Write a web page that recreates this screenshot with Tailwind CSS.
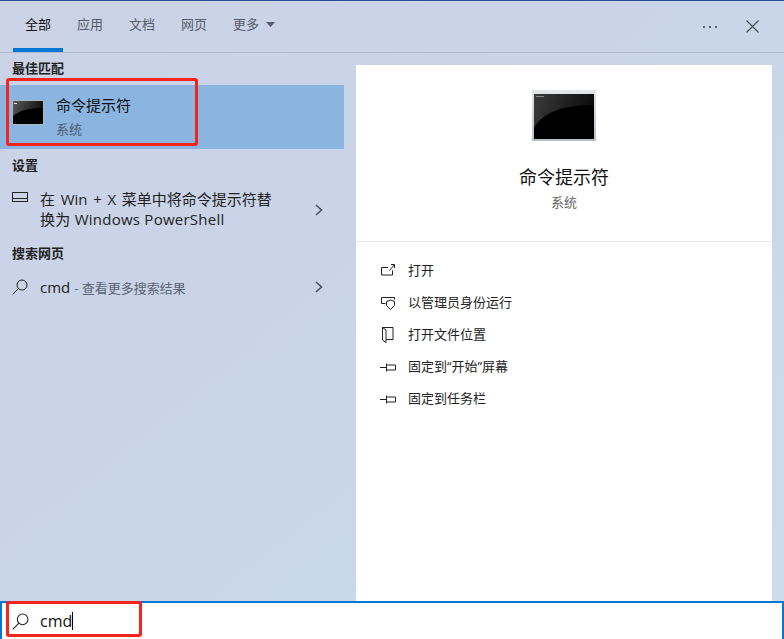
<!DOCTYPE html>
<html lang="zh-CN">
<head>
  <meta charset="UTF-8" />
  <title>搜索</title>
  <script src="https://cdn.jsdelivr.net/npm/@tailwindcss/browser@4"></script>
</head>
<body class="w-[784px] h-[639px] overflow-hidden font-['Open_Sans','Noto_Sans_CJK_SC',sans-serif] text-[15px] text-[#1a1a1a]">
  <div class="relative w-[784px] h-[639px] flex flex-col bg-gradient-to-br from-[#cbd2e6] via-[#c9d5e9] to-[#cbdcee] border-t border-[#2b4f94]">

    <!-- tabs -->
    <header class="h-[52px] shrink-0 flex items-center border-b border-[#b3bccf] pl-[13px] pr-[25px]">
      <nav class="flex h-full text-[13px] text-[#555d6b]">
        <a class="w-[50px] flex items-center justify-center border-b-4 border-[#0078d4] text-[#111]">全部</a>
        <a class="w-[52px] flex items-center justify-center border-b-4 border-transparent ml-[1px]">应用</a>
        <a class="w-[52px] flex items-center justify-center border-b-4 border-transparent">文档</a>
        <a class="w-[52px] flex items-center justify-center border-b-4 border-transparent">网页</a>
        <a class="ml-[13px] flex items-center gap-[7px] border-b-4 border-transparent">更多
          <svg width="9" height="5" viewBox="0 0 9 5"><path d="M0 0h9L4.5 5z" fill="#555d6b"/></svg>
        </a>
      </nav>
      <div class="ml-auto flex items-center gap-[29px]">
        <svg width="14" height="2" viewBox="0 0 14 2" fill="#5a6270"><rect x="0" y="0" width="2" height="2"/><rect x="6" y="0" width="2" height="2"/><rect x="12" y="0" width="2" height="2"/></svg>
        <svg width="13" height="13" viewBox="0 0 13 13" fill="none" stroke="#444c58" stroke-width="1.1"><path d="M.5.5l12 12M12.5.5l-12 12"/></svg>
      </div>
    </header>

    <div class="flex-1 flex min-h-0 pt-[8px]">
      <!-- results -->
      <main class="w-[344px] shrink-0">
        <h2 class="pl-[12px] h-[24px] text-[13px] font-bold leading-[15px] text-[#222]">最佳匹配</h2>
        <div class="h-[64px] bg-[#8ab5e0] flex items-center pl-[12px]">
          <svg width="32" height="25" viewBox="0 0 32 25" class="shrink-0 mb-[9px]">
            <defs>
              <linearGradient id="gloss-small" x1="0" y1="0" x2="1" y2="0.2"><stop offset="0" stop-color="#5a5a5a"/><stop offset="1" stop-color="#111"/></linearGradient>
            </defs>
            <rect width="32" height="25" fill="#aeb6bf"/>
            <rect x="1" y="1" width="30" height="23" fill="#000"/>
            <path d="M1 1h30v7C18 8 8 10 1 16z" fill="url(#gloss-small)"/>
            <rect x="2" y="3" width="3" height="1" fill="#ddd"/>
          </svg>
          <div class="ml-[12px]">
            <div class="text-[15px] leading-[20px] text-[#111] mt-[-2px]">命令提示符</div>
            <div class="text-[13px] leading-[17px] text-[#4d5c70] mt-[6px]">系统</div>
          </div>
        </div>

        <h2 class="pl-[12px] mt-[8px] h-[24px] text-[13px] font-bold leading-[17px] text-[#222]">设置</h2>
        <div class="flex h-[58px] pl-[12px] pr-[21px] pt-[8px]">
          <svg width="16" height="10" viewBox="0 0 16 10" fill="none" stroke="#222" class="mt-[3px] shrink-0"><rect x=".5" y=".5" width="15" height="9"/><path d="M0 6.5h16"/></svg>
          <div class="ml-[12px] w-[240px] text-[15px] leading-[20px] text-[#222] whitespace-nowrap">
            <div class="[word-spacing:1.8px]">在 Win + X 菜单中将命令提示符替</div>
            <div class="tracking-[0.25px]">换为 Windows PowerShell</div>
          </div>
          <svg width="8" height="12" viewBox="0 0 8 12" fill="none" stroke="#4a5260" stroke-width="1.6" class="ml-auto mt-[15px]"><path d="M1 1l5.5 5L1 11"/></svg>
        </div>

        <h2 class="pl-[12px] mt-[6px] h-[24px] text-[13px] font-bold leading-[17px] text-[#222]">搜索网页</h2>
        <div class="flex items-center h-[36px] pl-[12px] pr-[21px]">
          <svg width="16" height="16" viewBox="0 0 16 16" fill="none" stroke="#222" class="shrink-0"><circle cx="10" cy="6" r="5"/><path d="M6.5 9.5L.7 15.5"/></svg>
          <div class="ml-[12px] flex items-baseline gap-[4px]"><span class="text-[#222]">cmd</span><span class="text-[13px] text-[#5a6472]">- 查看更多搜索结果</span></div>
          <svg width="8" height="12" viewBox="0 0 8 12" fill="none" stroke="#4a5260" stroke-width="1.6" class="ml-auto"><path d="M1 1l5.5 5L1 11"/></svg>
        </div>
      </main>

      <!-- preview -->
      <aside class="ml-[12px] mt-[4px] w-[416px] bg-white flex flex-col">
        <div class="h-[177px] shrink-0 border-b border-[#e6e6e6] flex flex-col items-center pt-[25px]">
          <svg width="64" height="51" viewBox="0 0 64 51">
            <defs>
              <linearGradient id="gloss-big" x1="0" y1="0" x2="1" y2="0.2"><stop offset="0" stop-color="#3c3c3c"/><stop offset="1" stop-color="#0c0c0c"/></linearGradient>
              <linearGradient id="frame" x1="0" y1="0" x2="0" y2="1"><stop offset="0" stop-color="#e4e6e8"/><stop offset="1" stop-color="#b9bfc6"/></linearGradient>
            </defs>
            <rect width="64" height="51" fill="url(#frame)"/>
            <rect x="2" y="4" width="60" height="45" fill="#000"/>
            <path d="M2 4h60v11C36 15 12 20 2 38z" fill="url(#gloss-big)"/>
            <rect x="4" y="6" width="8" height="1" fill="#888"/>
          </svg>
          <div class="mt-[23px] text-[18px] leading-[26px] text-[#111]">命令提示符</div>
          <div class="mt-[4px] text-[13px] leading-[17px] text-[#666]">系统</div>
        </div>
        <ul class="pt-[13px] text-[13px] text-[#222]">
          <li class="h-[32px] flex items-center pl-[24px] gap-[12px]">
            <svg width="16" height="16" viewBox="0 0 16 16" fill="none" stroke="#222"><path d="M8 4.5H1.5V12h11V7.5M9.5 7.5l5-6M11 1.5h3.5V5"/></svg>
            打开
          </li>
          <li class="h-[32px] flex items-center pl-[24px] gap-[12px]">
            <svg width="16" height="16" viewBox="0 0 16 16" fill="none" stroke="#222"><path d="M5.5 8.5h-4v-6h13v2M6.5 6.5l4-1.5 4 1.5v4l-4 4-4-4z"/></svg>
            以管理员身份运行
          </li>
          <li class="h-[32px] flex items-center pl-[24px] gap-[12px]">
            <svg width="16" height="16" viewBox="0 0 16 16" fill="none" stroke="#222"><path d="M2.5.5V13L6 15.5V3L2.5.5H13v12H6"/></svg>
            打开文件位置
          </li>
          <li class="h-[32px] flex items-center pl-[24px] gap-[12px]">
            <svg width="16" height="16" viewBox="0 0 16 16" fill="none" stroke="#222"><path d="M0 8.5h6M6.5 4.5v8M6.5 6h9v5h-9"/></svg>
            固定到“开始”屏幕
          </li>
          <li class="h-[32px] flex items-center pl-[24px] gap-[12px]">
            <svg width="16" height="16" viewBox="0 0 16 16" fill="none" stroke="#222"><path d="M0 8.5h6M6.5 4.5v8M6.5 6h9v5h-9"/></svg>
            固定到任务栏
          </li>
        </ul>
      </aside>
    </div>

    <!-- search box -->
    <footer class="h-[38px] shrink-0 bg-white border-2 border-b-0 border-[#0078d4] flex items-center pl-[10px]">
      <svg width="17" height="17" viewBox="0 0 16 16" fill="none" stroke="#222"><circle cx="10" cy="6" r="5"/><path d="M6.5 9.5L.7 15.5"/></svg>
      <span class="ml-[11px] text-[16px] text-[#111]">cmd</span>
      <span class="w-px h-[18px] bg-black"></span>
    </footer>

    <!-- red annotation boxes -->
    <div class="absolute left-[6px] top-[77px] w-[192px] h-[68px] border-[3px] border-[#f5251d] rounded-[3px]"></div>
    <div class="absolute left-[6px] top-[600px] w-[136px] h-[36px] border-[3px] border-[#f5251d] rounded-[3px]"></div>
  </div>
</body>
</html>
